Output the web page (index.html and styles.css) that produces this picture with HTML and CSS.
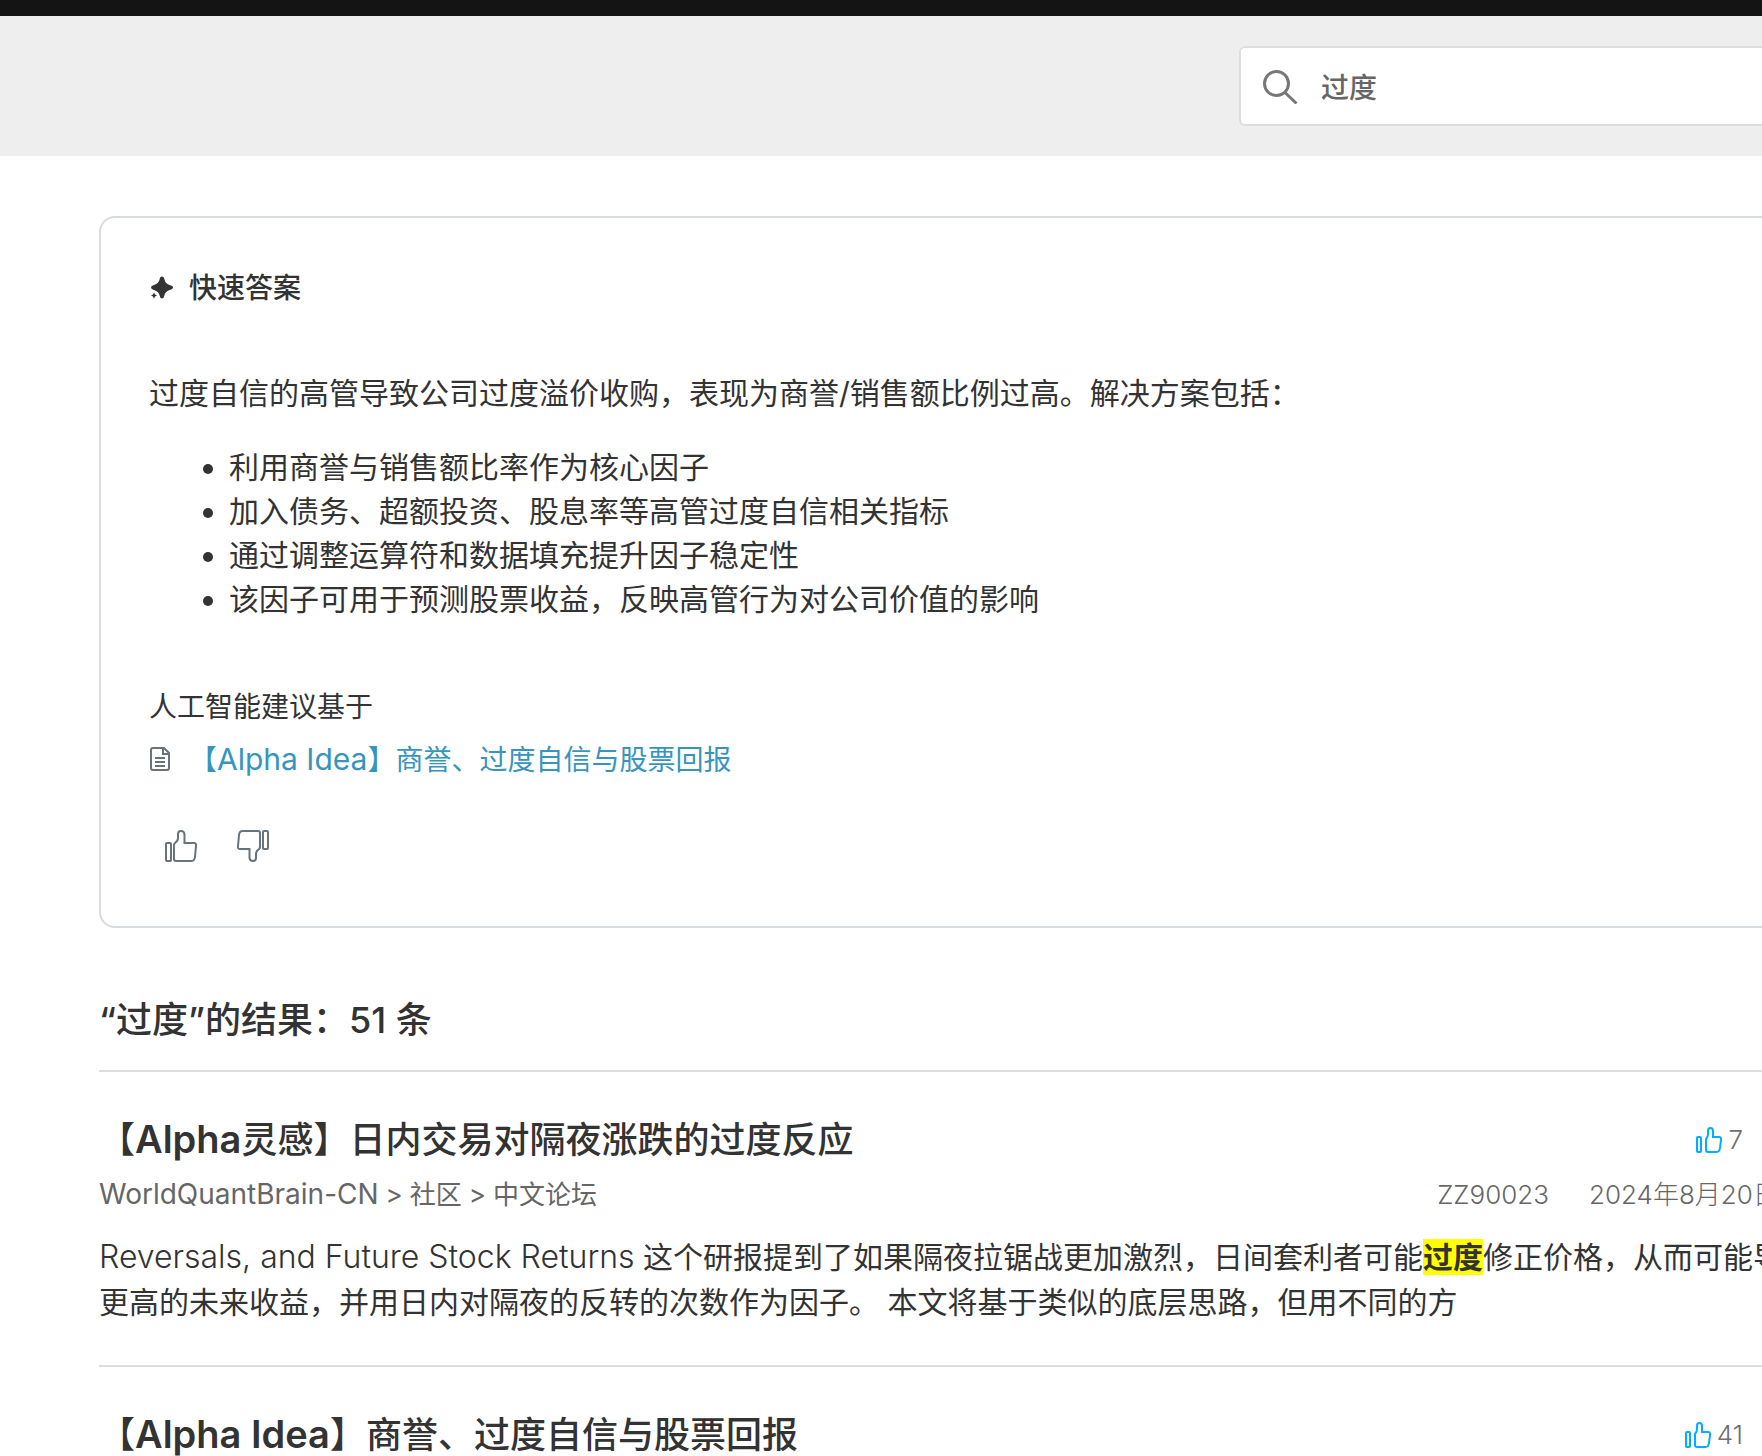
FILE: index.html
```html
<!DOCTYPE html>
<html lang="zh-CN">
<head>
    <meta charset="UTF-8">
    <meta name="viewport" content="width=device-width, initial-scale=1.0">
    <title>搜索结果</title>
    <link rel="stylesheet" href="styles.css">
</head>
<body>
    <!-- Shared icons -->
    <svg class="icon-defs" aria-hidden="true">
        <symbol id="thumb" viewBox="0 0 32 32">
            <rect x="1" y="13" width="5" height="18" rx="1"/>
            <path d="M9 15q0-1 1-2 3-2 3-5V4q0-3 3-3t3.500 3v9H29q2.500 0 2 3l-1 11q-.5 4-3.500 4H11q-2 0-2-2z"/>
        </symbol>
        <symbol id="thumb-bold" viewBox="0 0 26 26">
            <rect x="1" y="10" width="4" height="15" rx="1"/>
            <path d="M10 12q2-2 2-5V4q0-3 2.500-3T17 4v6h6q2.500 0 2 3l-1 8q-.5 4-3.500 4H12q-2 0-2-2z"/>
        </symbol>
    </svg>

    <div class="top-bar"></div>
    <header class="search-band">
        <form class="search-box" role="search">
            <svg class="search-icon" viewBox="0 0 36 36" aria-hidden="true">
                <circle cx="13.500" cy="15.500" r="12"/>
                <path d="M22 24.500 33.500 35.500"/>
            </svg>
            <input type="search" class="search-input" value="过度" aria-label="搜索">
        </form>
    </header>

    <main class="page">
        <section class="answer-card">
            <h2 class="answer-title">
                <svg class="spark-icon" viewBox="0 0 24 24" aria-hidden="true">
                    <path d="M13 .5q1.800 0 2.200 2Q16 7.500 20.500 9q3.500.8 3.500 2.500T20.500 14q-4.500 1.500-5.300 6-.4 2.500-2.200 2.500t-2.200-2.500Q10 15.500 5 14q-3-.8-3-2.500T5 9q5-1.500 5.800-6.500.4-2 2.200-2z"/>
                    <path d="m5 16.500 1 2 2 1-2 1-1 2.200-1-2.200-2-1 2-1z"/>
                </svg>
                快速答案
            </h2>
            <p class="answer-text">过度自信的高管导致公司过度溢价收购，表现为商誉/销售额比例过高。解决方案包括：</p>
            <ul class="answer-list">
                <li>利用商誉与销售额比率作为核心因子</li>
                <li>加入债务、超额投资、股息率等高管过度自信相关指标</li>
                <li>通过调整运算符和数据填充提升因子稳定性</li>
                <li>该因子可用于预测股票收益，反映高管行为对公司价值的影响</li>
            </ul>
            <p class="source-label">人工智能建议基于</p>
            <a class="source-link" href="#">
                <svg class="doc-icon" viewBox="0 0 22 26" aria-hidden="true">
                    <path d="M4 1h11l5 5v15q0 2-2 2H4q-2 0-2-2V3q0-2 2-2zM14 1v6h6M6 11h10M6 15h10M6 19h10"/>
                </svg>
                <span>【<span class="latin">Alpha Idea</span>】商誉、过度自信与股票回报</span>
            </a>
            <div class="feedback">
                <button type="button" class="feedback-btn" aria-label="有帮助"><svg><use href="#thumb"/></svg></button>
                <button type="button" class="feedback-btn down" aria-label="没有帮助"><svg><use href="#thumb"/></svg></button>
            </div>
        </section>

        <h1 class="results-title">“过度”的结果：51 条</h1>

        <article class="result">
            <div class="result-head">
                <h2 class="result-title"><a href="#">【<span class="latin">Alpha</span>灵感】日内交易对隔夜涨跌的过度反应</a></h2>
                <span class="votes"><svg><use href="#thumb-bold"/></svg>7</span>
            </div>
            <div class="result-meta">
                <nav class="crumbs"><a href="#" class="latin">WorldQuantBrain-CN</a><span class="sep">&gt;</span><a href="#">社区</a><span class="sep">&gt;</span><a href="#">中文论坛</a></nav>
                <span class="author">ZZ90023</span>
                <time class="date" datetime="2024-08-20">2024年8月20日</time>
            </div>
            <p class="result-text"><span class="latin">Reversals, and Future Stock Returns</span> 这个研报提到了如果隔夜拉锯战更加激烈，日间套利者可能<mark>过度</mark>修正价格，从而可能导致更高的未来收益，并用日内对隔夜的反转的次数作为因子。 本文将基于类似的底层思路，但用不同的方</p>
        </article>

        <article class="result">
            <div class="result-head">
                <h2 class="result-title"><a href="#">【<span class="latin">Alpha Idea</span>】商誉、过度自信与股票回报</a></h2>
                <span class="votes"><svg><use href="#thumb-bold"/></svg>41</span>
            </div>
        </article>
    </main>
</body>
</html>
```
FILE: styles.css
```css
* {
    box-sizing: border-box;
}
html {
    overflow: hidden;
}
body {
    margin: 0;
    overflow-x: hidden;
    background-color: #fff;
    color: #333;
    font-family: Inter, "Noto Sans CJK SC", sans-serif;
    font-size: 30px;
    line-height: 44px;
    text-spacing-trim: space-all;
}
h1, h2, p, ul {
    margin: 0;
}
a {
    color: inherit;
    text-decoration: none;
}
svg {
    fill: none;
    stroke: currentColor;
    stroke-width: 2;
    flex-shrink: 0;
}
.icon-defs {
    display: none;
}
/* Latin runs are set one step larger than the Chinese around them */
.latin {
    line-height: 1;
}
.top-bar {
    height: 16px;
    background-color: #141414;
}

/* Search, runs to the same right edge as the page */
.search-band {
    display: flex;
    justify-content: flex-end;
    height: 140px;
    padding-top: 30px;
    background-color: #eee;
}
.search-box {
    display: flex;
    align-items: center;
    gap: 22px;
    flex: 0 0 580px;
    height: 80px;
    margin-right: -57px;
    padding: 0 22px;
    background-color: #fff;
    border: 2px solid #ddd;
    border-radius: 6px;
}
.search-icon {
    width: 36px;
    height: 36px;
    color: #777;
    stroke-width: 3;
}
.search-input {
    flex: 1;
    padding: 0;
    border: none;
    outline: none;
    background: none;
    color: #666;
    font-family: inherit;
    font-size: 28px;
    font-weight: 500;
    appearance: none;
}

.page {
    margin: 60px -57px 0 99px;
}

/* Quick answer */
.answer-card {
    padding: 48px;
    border: 2px solid #d8dcde;
    border-radius: 16px;
}
.answer-title {
    display: flex;
    align-items: center;
    gap: 16px;
    font-size: 28px;
    font-weight: 500;
}
.spark-icon {
    width: 24px;
    height: 24px;
    fill: currentColor;
    stroke: none;
}
.answer-text {
    margin-top: 61px;
}
.answer-list {
    margin-top: 30px;
    padding-left: 80px;
}
.source-label {
    margin-top: 64px;
    font-size: 28px;
}
.source-link {
    display: flex;
    align-items: center;
    gap: 18px;
    margin-top: 9px;
    color: #3795bd;
    font-size: 28px;
}
.source-link .latin {
    font-size: 30px;
}
.doc-icon {
    width: 22px;
    height: 26px;
    color: #68737d;
}
.feedback {
    display: flex;
    gap: 8px;
    margin-top: 32px;
}
.feedback-btn {
    display: flex;
    align-items: center;
    justify-content: center;
    width: 64px;
    height: 64px;
    padding: 0;
    border: none;
    background: none;
    color: #68737d;
    cursor: pointer;
}
.feedback-btn svg {
    width: 32px;
    height: 32px;
}
.feedback-btn.down svg {
    transform: rotate(180deg);
}

/* Results */
.results-title {
    margin-top: 70px;
    padding-bottom: 28px;
    font-size: 36px;
    font-weight: 500;
}
.result {
    padding: 46px 0 40px;
    border-top: 2px solid #ddd;
}
.result-head {
    display: flex;
    align-items: center;
    justify-content: space-between;
}
.result-title {
    font-size: 36px;
    font-weight: 500;
}
.result-title .latin {
    font-size: 38px;
    font-weight: 600;
}
.votes {
    display: flex;
    align-items: center;
    gap: 6px;
    padding-right: 76px;
    color: #707070;
    font-size: 26px;
    font-weight: 300;
}
.votes svg {
    width: 26px;
    height: 26px;
    color: #00aeff;
}
.result-meta {
    display: flex;
    gap: 40px;
    margin-top: 12px;
    color: #666;
    font-size: 26px;
    font-weight: 300;
    line-height: 42px;
}
.crumbs {
    flex: 1;
    font-weight: 400;
}
.crumbs .latin {
    font-size: 28px;
}
.crumbs .sep {
    margin: 0 7px;
}
.date {
    flex: 0 0 230px;
    white-space: nowrap;
}
.result-text {
    margin-top: 19px;
    line-height: 45px;
}
.result-text .latin {
    font-size: 32px;
    font-weight: 300;
}
mark {
    background-color: #ff0;
    color: inherit;
    font-weight: 600;
}
```
